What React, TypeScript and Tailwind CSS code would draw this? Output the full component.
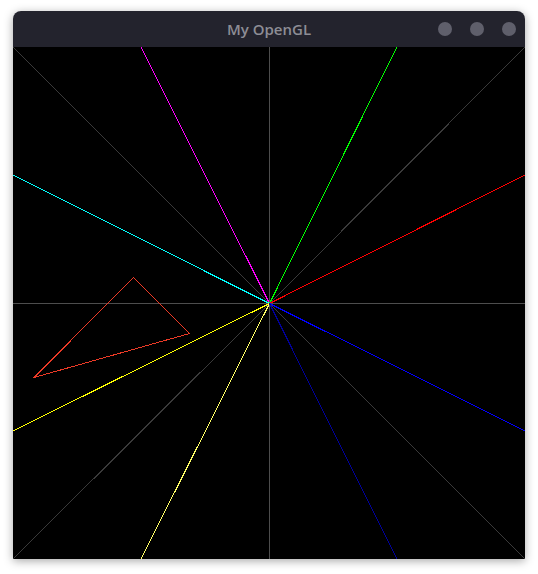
import React from 'react';

type Seg = { x: number; y: number; color: string };

// endpoints in canvas space (512x512), every ray starts at the centre
const rays: Seg[] = [
  { x: 0, y: 0, color: '#3a3a3a' },
  { x: 512, y: 0, color: '#3a3a3a' },
  { x: 0, y: 512, color: '#3a3a3a' },
  { x: 512, y: 512, color: '#3a3a3a' },
  { x: 128, y: 0, color: '#ff00ff' },
  { x: 384, y: 0, color: '#00ff00' },
  { x: 512, y: 128, color: '#ff0000' },
  { x: 0, y: 128, color: '#00ffff' },
  { x: 0, y: 384, color: '#ffff00' },
  { x: 128, y: 512, color: '#ffff66' },
  { x: 512, y: 384, color: '#0000ff' },
  { x: 384, y: 512, color: '#00009a' },
];

const Scene: React.FC = () => (
  <svg width="512" height="512" viewBox="0 0 512 512" shapeRendering="crispEdges" className="block">
    <line x1="256.5" y1="0" x2="256.5" y2="512" stroke="#4d4d4d" strokeWidth="1" />
    <line x1="0" y1="256.5" x2="512" y2="256.5" stroke="#4d4d4d" strokeWidth="1" />
    {rays.map((r, i) => (
      <line key={i} x1="256.5" y1="256.5" x2={r.x} y2={r.y} stroke={r.color} strokeWidth="1" />
    ))}
    <polygon points="120.5,230.5 176.5,286.5 21,330.5" fill="none" stroke="#ec3a26" strokeWidth="1" />
  </svg>
);

const App: React.FC = () => {
  return (
    <div className="w-[538px] h-[574px] bg-white pl-[13px] pt-[11px]">
      <div className="w-[512px] rounded-t-lg overflow-hidden shadow-[0_2px_10px_rgba(0,0,0,0.35)]">
        <div className="relative h-[36px] bg-[#23232d] flex items-center justify-center">
          <span className="text-[15px] font-semibold text-[#8d8d95] font-['Open_Sans',sans-serif]">My OpenGL</span>
          <div className="absolute right-[9px] top-0 h-full flex items-center gap-[18px]">
            <span className="w-[14px] h-[14px] rounded-full bg-[#5f5f6b]" />
            <span className="w-[14px] h-[14px] rounded-full bg-[#5f5f6b]" />
            <span className="w-[14px] h-[14px] rounded-full bg-[#5f5f6b]" />
          </div>
        </div>
        <div className="bg-black">
          <Scene />
        </div>
      </div>
    </div>
  );
};

export default App;
